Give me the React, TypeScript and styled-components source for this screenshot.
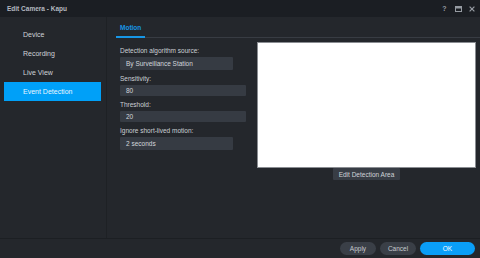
import React from 'react';
import styled, { createGlobalStyle } from 'styled-components';

const GlobalStyle = createGlobalStyle`
  html, body {
    margin: 0;
    padding: 0;
    background: #24272c;
  }
  * {
    box-sizing: border-box;
  }
`;

const Window = styled.div`
  width: 480px;
  height: 258px;
  display: flex;
  flex-direction: column;
  background: #24272c;
  font-family: 'Liberation Sans', Arial, sans-serif;
  font-size: 6.5px;
  color: #c9cdd2;
  overflow: hidden;
`;

const TitleBar = styled.div`
  height: 17px;
  flex: none;
  display: flex;
  align-items: center;
  justify-content: space-between;
  padding: 0 5px 0 7px;
  background: #1b1e23;
`;

const Title = styled.div`
  font-weight: bold;
  color: #b4b9c0;
`;

const TitleIcons = styled.div`
  display: flex;
  align-items: center;
  gap: 7px;
  color: #969ba2;
`;

const Help = styled.span`
  font-size: 7px;
  font-weight: bold;
  width: 7px;
  text-align: center;
`;

const Body = styled.div`
  flex: 1;
  display: flex;
  min-height: 0;
  border-bottom: 1px solid #1c1f23;
`;

const Sidebar = styled.nav`
  width: 107px;
  flex: none;
  display: flex;
  flex-direction: column;
  padding: 8px 5px 0 4px;
  border-right: 1px solid #1e2125;
`;

const NavItem = styled.div<{ $active?: boolean }>`
  height: 19px;
  display: flex;
  align-items: center;
  padding-left: 19px;
  font-size: 7px;
  color: ${({ $active }) => ($active ? '#eaf6ff' : '#cfd3d8')};
  background: ${({ $active }) => ($active ? '#00a0f8' : 'transparent')};
`;

const Content = styled.div`
  flex: 1;
  display: flex;
  flex-direction: column;
  padding-left: 9px;
`;

const TabBar = styled.div`
  height: 21px;
  flex: none;
  display: flex;
  align-items: stretch;
  border-bottom: 1px solid #383c43;
`;

const Tab = styled.div<{ $active?: boolean }>`
  display: flex;
  align-items: center;
  padding: 2px 4px 0;
  font-weight: bold;
  color: ${({ $active }) => ($active ? '#1796e6' : '#b4b9c0')};
  border-bottom: 2px solid ${({ $active }) => ($active ? '#1796e6' : 'transparent')};
  margin-bottom: -1px;
`;

const Panel = styled.div`
  display: flex;
  align-items: flex-start;
  padding: 4px 0 0 4px;
`;

const Form = styled.div`
  width: 126px;
  flex: none;
  display: flex;
  flex-direction: column;
  gap: 4px;
  padding-top: 4px;
`;

const Field = styled.div`
  display: flex;
  flex-direction: column;
`;

const Label = styled.div`
  line-height: 10px;
  height: 10px;
  margin-bottom: 1px;
  color: #ccd0d5;
`;

const Control = styled.div<{ $select?: boolean }>`
  width: ${({ $select }) => ($select ? '113px' : '126px')};
  height: ${({ $select }) => ($select ? '13px' : '11px')};
  display: flex;
  align-items: center;
  padding-left: 6px;
  background: #363b43;
  border-radius: 1px;
  color: #d2d6db;
`;

const PreviewColumn = styled.div`
  margin-left: 11px;
  display: flex;
  flex-direction: column;
  align-items: center;
`;

const Preview = styled.div`
  width: 219px;
  height: 126px;
  background: #ffffff;
  border: 1px solid #8a8d92;
`;

const AreaButton = styled.div`
  height: 12px;
  padding: 0 6px;
  display: flex;
  align-items: center;
  background: #383d45;
  color: #d0d4d9;
  border-radius: 1px;
`;

const Footer = styled.div`
  height: 19px;
  flex: none;
  display: flex;
  align-items: center;
  justify-content: flex-end;
  gap: 4px;
  padding: 0 5px 0 0;
`;

const FooterButton = styled.div<{ $primary?: boolean; $w: number }>`
  width: ${({ $w }) => $w}px;
  height: 13px;
  border-radius: 7px;
  display: flex;
  align-items: center;
  justify-content: center;
  background: ${({ $primary }) => ($primary ? '#0a9ef7' : '#3a3f47')};
  color: ${({ $primary }) => ($primary ? '#ffffff' : '#c6cad0')};
`;

const navItems = ['Device', 'Recording', 'Live View', 'Event Detection'];

const fields = [
  { label: 'Detection algorithm source:', value: 'By Surveillance Station', select: true },
  { label: 'Sensitivity:', value: '80', select: false },
  { label: 'Threshold:', value: '20', select: false },
  { label: 'Ignore short-lived motion:', value: '2 seconds', select: true },
];

export default function App() {
  return (
    <>
      <GlobalStyle />
      <Window>
        <TitleBar>
          <Title>Edit Camera - Kapu</Title>
          <TitleIcons>
            <Help>?</Help>
            <svg width='7' height='6' viewBox='0 0 7 6'>
              <rect x='0.5' y='0.5' width='6' height='5' fill='none' stroke='currentColor' strokeWidth='1' />
              <rect x='0.5' y='0.5' width='6' height='2' fill='currentColor' />
            </svg>
            <svg width='6' height='6' viewBox='0 0 6 6'>
              <path d='M0.6 0.6 L5.4 5.4 M5.4 0.6 L0.6 5.4' stroke='currentColor' strokeWidth='1.2' />
            </svg>
          </TitleIcons>
        </TitleBar>
        <Body>
          <Sidebar>
            {navItems.map((item) => (
              <NavItem key={item} $active={item === 'Event Detection'}>
                {item}
              </NavItem>
            ))}
          </Sidebar>
          <Content>
            <TabBar>
              <Tab $active>Motion</Tab>
            </TabBar>
            <Panel>
              <Form>
                {fields.map((f) => (
                  <Field key={f.label}>
                    <Label>{f.label}</Label>
                    <Control $select={f.select}>{f.value}</Control>
                  </Field>
                ))}
              </Form>
              <PreviewColumn>
                <Preview />
                <AreaButton>Edit Detection Area</AreaButton>
              </PreviewColumn>
            </Panel>
          </Content>
        </Body>
        <Footer>
          <FooterButton $w={36}>Apply</FooterButton>
          <FooterButton $w={36}>Cancel</FooterButton>
          <FooterButton $w={55} $primary>
            OK
          </FooterButton>
        </Footer>
      </Window>
    </>
  );
}
